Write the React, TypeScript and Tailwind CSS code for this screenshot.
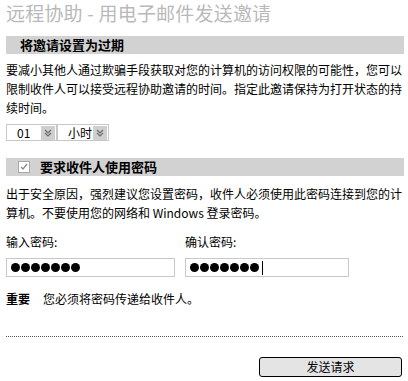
import React from 'react';

const font = { fontFamily: "'Noto Sans CJK SC', 'Noto Sans', sans-serif" };

function DoubleChevron() {
  return (
    <svg width="8" height="8" viewBox="0 0 8 8" fill="none" stroke="#6b6b6b" strokeWidth="1.2">
      <polyline points="1,1 4,4 7,1" />
      <polyline points="1,4 4,7 7,4" />
    </svg>
  );
}

function FakeSelect({ value, width }: { value: string; width: string }) {
  return (
    <div className={`flex h-[17px] items-center border border-[#c8c8c8] bg-white ${width}`}>
      <span className="flex-1 pl-[10px] text-[12px] leading-[15px] text-black">{value}</span>
      <span className="mr-[1px] flex h-[14px] w-[14px] items-center justify-center bg-[#cfcfcf]">
        <DoubleChevron />
      </span>
    </div>
  );
}

function SectionBar({ children }: { children: React.ReactNode }) {
  return (
    <div className="flex h-[18px] items-center bg-[#d2d2d2] pl-[14px] text-[13px] font-bold leading-[18px] text-black">
      {children}
    </div>
  );
}

function PasswordDots({ count, caret }: { count: number; caret?: boolean }) {
  return (
    <div className="flex items-center gap-[1px]">
      {Array.from({ length: count }).map((_, i) => (
        <span key={i} className="h-[9px] w-[9px] rounded-full bg-black" />
      ))}
      {caret && <span className="ml-[2px] h-[14px] w-[1px] bg-black" />}
    </div>
  );
}

export default function App() {
  return (
    <div className="h-[381px] w-[408px] bg-white px-[6px] text-black" style={font}>
      <div className="pt-[1px] text-[19px] leading-[23px] tracking-[0.2px] text-[#b9b9b9]">
        远程协助 - 用电子邮件发送邀请
      </div>

      <div className="mt-[12px] mr-[-2px]">
        <SectionBar>将邀请设置为过期</SectionBar>
      </div>

      <p className="mt-[6px] text-[12px] leading-[19px]">
        要减小其他人通过欺骗手段获取对您的计算机的访问权限的可能性，您可以限制收件人可以接受远程协助邀请的时间。指定此邀请保持为打开状态的持续时间。
      </p>

      <div className="mt-[7px] flex">
        <FakeSelect value="01" width="w-[51px]" />
        <FakeSelect value="小时" width="w-[52px]" />
      </div>

      <div className="mt-[17px] mr-[-2px]">
        <div className="flex h-[18px] items-center bg-[#d2d2d2] pl-[12px] text-[13px] font-bold leading-[18px]">
          <span className="mr-[10px] flex h-[12px] w-[12px] items-center justify-center border border-[#a8a8a8] bg-white">
            <svg width="8" height="8" viewBox="0 0 8 8" fill="none" stroke="#8a8a8a" strokeWidth="1.3">
              <polyline points="1,4 3,6 7,1" />
            </svg>
          </span>
          要求收件人使用密码
        </div>
      </div>

      <p className="mt-[8px] text-[12px] leading-[19px]">
        出于安全原因，强烈建议您设置密码，收件人必须使用此密码连接到您的计算机。不要使用您的网络和 Windows 登录密码。
      </p>

      <div className="mt-[10px] flex text-[12px] leading-[19px]">
        <span className="w-[179px]">输入密码:</span>
        <span>确认密码:</span>
      </div>

      <div className="mt-[7px] flex">
        <div className="flex h-[19px] w-[169px] items-center border border-[#c8c8c8] pl-[4px]">
          <PasswordDots count={7} />
        </div>
        <div className="ml-[10px] flex h-[19px] w-[164px] items-center border border-[#c8c8c8] pl-[4px]">
          <PasswordDots count={7} caret />
        </div>
      </div>

      <div className="mt-[12px] flex text-[12px] leading-[19px]">
        <span className="w-[37px] font-bold">重要</span>
        <span>您必须将密码传递给收件人。</span>
      </div>

      <div className="mt-[28px] mr-[-1px] border-t border-dotted border-[#555]" />

      <div className="mt-[20px] flex justify-end">
        <button
          type="button"
          className="h-[20px] w-[143px] rounded-[3px] border border-black bg-[#e4e4e4] text-[12px] leading-[18px] text-black"
          style={font}
        >
          发送请求
        </button>
      </div>
    </div>
  );
}
